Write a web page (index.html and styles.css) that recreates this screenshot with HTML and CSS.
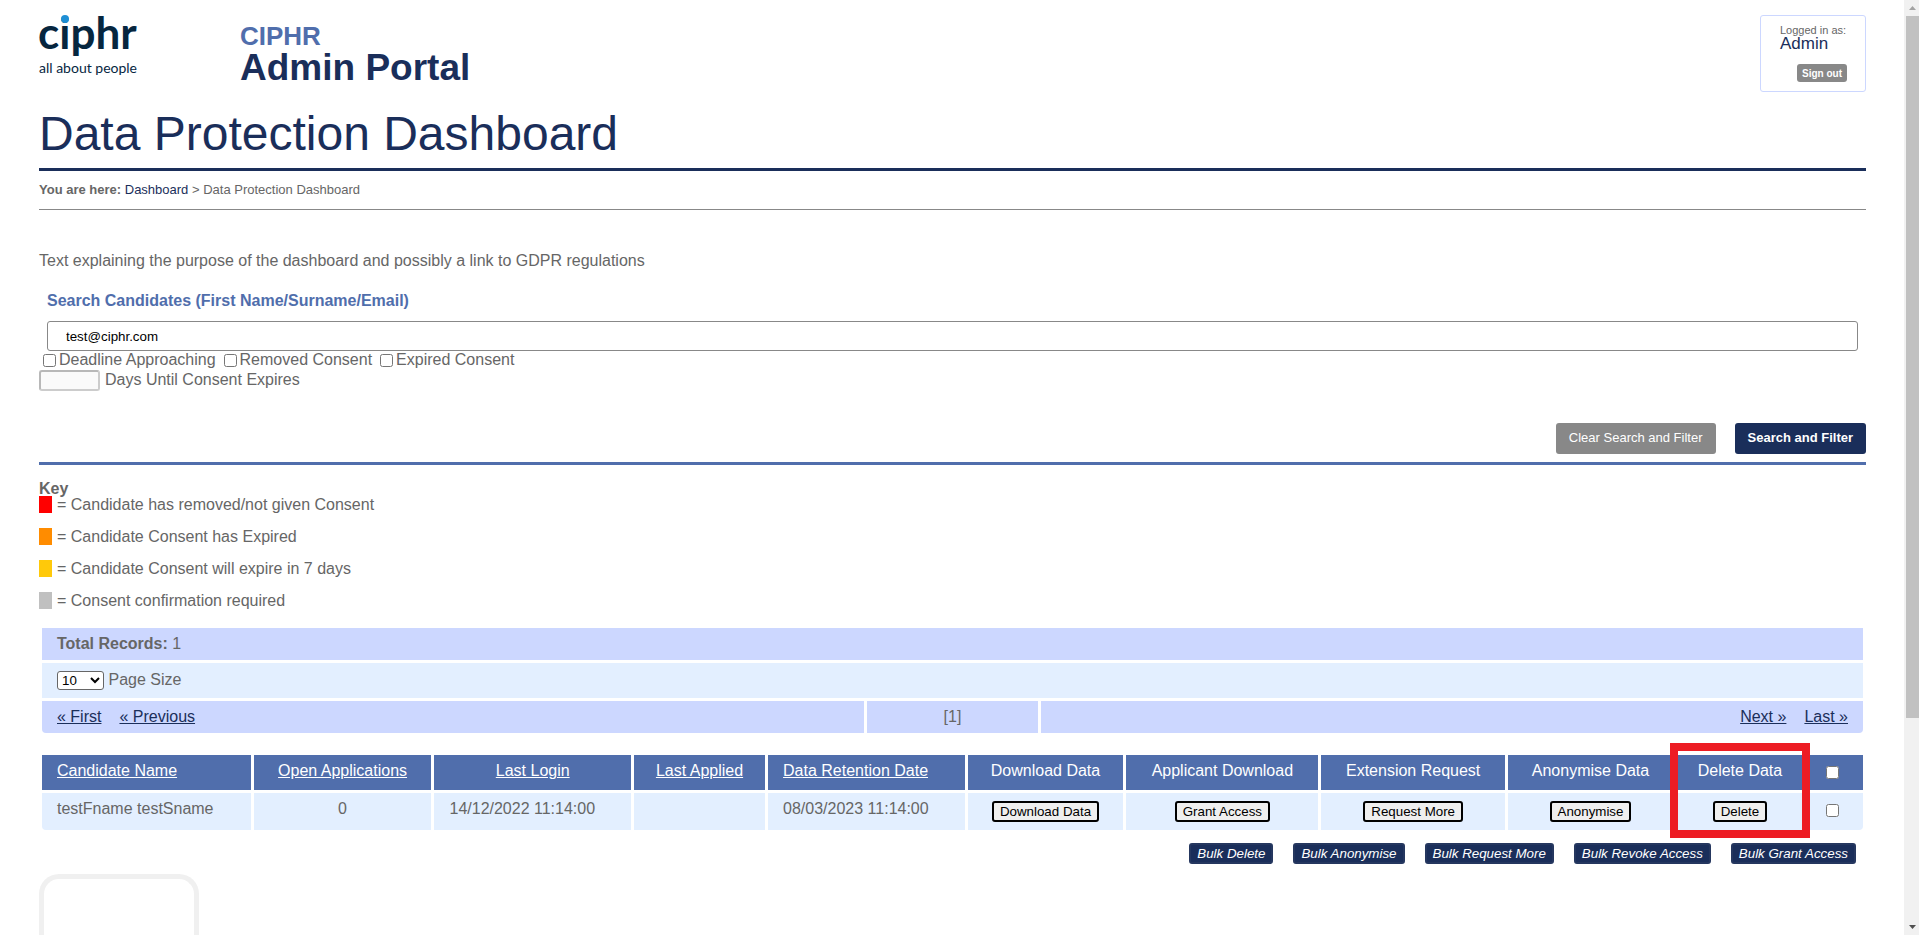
FILE: index.html
```html
<!DOCTYPE html>
<html lang="en">
<head>
    <meta charset="UTF-8">
    <title>Data Protection Dashboard</title>
    <link rel="stylesheet" href="styles.css">
</head>
<body>

    <div class="page">
        <header class="header">
            <a class="logo" href="#" aria-label="ciphr - all about people">
                <svg width="104" height="64" viewBox="0 0 104 64">
                    <text class="logo-name" x="-1" y="34">ciphr</text>
                    <circle cx="26" cy="4" r="4" fill="#1e8fd5" />
                    <text class="logo-tag" x="0" y="58">all about people</text>
                </svg>
            </a>
            <div class="brand">
                <div class="brand-company">CIPHR</div>
                <div class="brand-name">Admin Portal</div>
            </div>
            <div class="login">
                <div class="login-label">Logged in as:</div>
                <div class="login-user">Admin</div>
                <button class="sign-out" type="button">Sign out</button>
            </div>
        </header>

        <h1>Data Protection Dashboard</h1>

        <nav class="breadcrumb">
            <b>You are here:</b> <a href="#">Dashboard</a> &gt; Data Protection Dashboard
        </nav>

        <p class="intro">Text explaining the purpose of the dashboard and possibly a link to GDPR regulations</p>

        <form class="search">
            <div class="search-field">
                <label for="search">Search Candidates (First Name/Surname/Email)</label>
                <input type="text" id="search" value="test@ciphr.com">
            </div>
            <div class="filters">
                <input type="checkbox" id="deadline"><label for="deadline">Deadline Approaching</label>
                <input type="checkbox" id="removed"><label for="removed">Removed Consent</label>
                <input type="checkbox" id="expired"><label for="expired">Expired Consent</label>
            </div>
            <div class="days">
                <input type="text" id="days" disabled>
                <label for="days">Days Until Consent Expires</label>
            </div>
            <div class="actions">
                <button class="btn btn-clear" type="button">Clear Search and Filter</button>
                <button class="btn btn-search" type="button">Search and Filter</button>
            </div>
        </form>

        <h2 class="key-title">Key</h2>
        <ul class="key">
            <li><span class="swatch red"></span>= Candidate has removed/not given Consent</li>
            <li><span class="swatch orange"></span>= Candidate Consent has Expired</li>
            <li><span class="swatch yellow"></span>= Candidate Consent will expire in 7 days</li>
            <li><span class="swatch grey"></span>= Consent confirmation required</li>
        </ul>

        <table class="pager">
            <colgroup>
                <col>
                <col class="col-current">
                <col>
            </colgroup>
            <tr>
                <td class="dark" colspan="3"><b>Total Records:</b> 1</td>
            </tr>
            <tr>
                <td class="size" colspan="3">
                    <select id="page-size">
                        <option>10</option>
                        <option>20</option>
                        <option>50</option>
                    </select>
                    <label for="page-size">Page Size</label>
                </td>
            </tr>
            <tr>
                <td class="dark prev"><a href="#">« First</a><a href="#">« Previous</a></td>
                <td class="dark current">[1]</td>
                <td class="dark next"><a href="#">Next »</a><a href="#">Last »</a></td>
            </tr>
        </table>

        <table class="candidates">
            <thead>
                <tr>
                    <th class="name"><a href="#">Candidate Name</a></th>
                    <th><a href="#">Open Applications</a></th>
                    <th><a href="#">Last Login</a></th>
                    <th><a href="#">Last Applied</a></th>
                    <th class="date"><a href="#">Data Retention Date</a></th>
                    <th>Download Data</th>
                    <th>Applicant Download</th>
                    <th>Extension Request</th>
                    <th>Anonymise Data</th>
                    <th class="highlight">Delete Data</th>
                    <th class="tick"><input type="checkbox" aria-label="Select all"></th>
                </tr>
            </thead>
            <tbody>
                <tr>
                    <td class="name">testFname testSname</td>
                    <td>0</td>
                    <td class="date">14/12/2022 11:14:00</td>
                    <td></td>
                    <td class="date">08/03/2023 11:14:00</td>
                    <td><button type="button">Download Data</button></td>
                    <td><button type="button">Grant Access</button></td>
                    <td><button type="button">Request More</button></td>
                    <td><button type="button">Anonymise</button></td>
                    <td><button type="button">Delete</button></td>
                    <td class="tick"><input type="checkbox" aria-label="Select candidate"></td>
                </tr>
            </tbody>
        </table>

        <div class="bulk">
            <button type="button">Bulk Delete</button>
            <button type="button">Bulk Anonymise</button>
            <button type="button">Bulk Request More</button>
            <button type="button">Bulk Revoke Access</button>
            <button type="button">Bulk Grant Access</button>
        </div>

        <div class="footer-box"></div>
    </div>

    <div class="scrollbar">
        <svg width="15" height="16" viewBox="0 0 15 16"><path d="M5 10 L8.500 6 L12 10 Z" fill="#a3a3a3" /></svg>
        <div class="scroll-thumb"></div>
        <div class="scroll-rest"></div>
        <svg width="15" height="16" viewBox="0 0 15 16"><path d="M5 6 L12 6 L8.500 10 Z" fill="#505050" /></svg>
    </div>

</body>
</html>
```
FILE: styles.css
```css
* {
    box-sizing: border-box;
}

body {
    display: flex;
    height: 100vh;
    margin: 0;
    overflow: hidden;
    background-color: #fff;
    color: #666;
    font-family: "Liberation Sans", Arial, sans-serif;
    font-size: 16px;
    line-height: 18px;
}

button,
input,
select {
    font-family: inherit;
}

a {
    color: #1a2e5a;
}

.page {
    display: flex;
    flex-direction: column;
    flex: 1;
    padding: 15px 38px 0 39px;
}

/* header */

.header {
    display: flex;
    align-items: flex-start;
}

.logo {
    width: 201px;
    height: 64px;
}

.logo svg {
    overflow: visible;
}

.logo-name {
    font-family: Lato, sans-serif;
    font-size: 44px;
    font-weight: bold;
    fill: #06263f;
}

.logo-tag {
    font-family: Lato, sans-serif;
    font-size: 14px;
    fill: #06263f;
}

.brand {
    flex: 1;
    padding-top: 7px;
    font-weight: bold;
}

.brand-company {
    color: #506eac;
    font-size: 26px;
    line-height: 28px;
}

.brand-name {
    color: #1a2e5a;
    font-size: 37px;
    line-height: 36px;
}

.login {
    display: flex;
    flex-direction: column;
    width: 106px;
    height: 77px;
    padding: 8px 18px 9px 19px;
    border: 1px solid #ccd7ff;
    border-radius: 3px;
}

.login-label {
    font-size: 11px;
    line-height: 12px;
    white-space: nowrap;
}

.login-user {
    color: #1a2e5a;
    font-size: 17px;
    line-height: 16px;
}

.sign-out {
    align-self: flex-end;
    height: 18px;
    margin-top: auto;
    padding: 0 5px;
    border: none;
    border-radius: 3px;
    background-color: #888;
    color: #fff;
    font-size: 10px;
    font-weight: bold;
}

h1 {
    margin: 14px 0 0;
    padding-bottom: 7px;
    border-bottom: 3px solid #1a2e5a;
    color: #1a2e5a;
    font-size: 48px;
    font-weight: normal;
    line-height: 55px;
}

.breadcrumb {
    padding: 11px 0 12px;
    border-bottom: 1px solid #888;
    font-size: 13px;
    line-height: 15px;
}

.breadcrumb a {
    text-decoration: none;
}

.intro {
    margin: 42px 0 22px;
}

/* search */

.search-field {
    padding: 0 8px;
}

.search-field label {
    display: block;
    margin-bottom: 11px;
    color: #506eac;
    font-weight: bold;
}

.search-field input {
    display: block;
    width: 100%;
    height: 30px;
    padding: 0 18px;
    border: 1px solid #888;
    border-radius: 3px;
}

.filters {
    display: flex;
    align-items: flex-start;
    height: 19px;
}

.filters input {
    margin: 3px 3px 0 4px;
}

.filters label {
    margin-right: 4px;
}

.days {
    display: flex;
    gap: 5px;
    line-height: 20px;
}

.days input {
    width: 61px;
    height: 21px;
    border: 2px solid #ccc;
    border-top-color: #b8b8b8;
    border-left-color: #b8b8b8;
    border-radius: 3px;
    background-color: #fafafa;
}

.actions {
    display: flex;
    justify-content: flex-end;
    gap: 19px;
    margin-top: 32px;
    padding-bottom: 8px;
    border-bottom: 3px solid #506eac;
}

.btn {
    height: 31px;
    padding: 0 13px 2px;
    border: none;
    border-radius: 3px;
    color: #fff;
    font-size: 13px;
}

.btn-clear {
    background-color: #888;
}

.btn-search {
    background-color: #1a2e5a;
    font-weight: bold;
}

/* key */

.key-title {
    margin: 16px 0 0;
    font-size: 16px;
    line-height: 15px;
}

.key {
    margin: 0 0 16px;
    padding: 0;
    list-style: none;
}

.key li {
    display: flex;
    gap: 5px;
    line-height: 17px;
}

.key li + li {
    margin-top: 15px;
}

.swatch {
    width: 13px;
    height: 17px;
}

.red {
    background-color: #ff0000;
}

.orange {
    background-color: #ff8c00;
}

.yellow {
    background-color: #ffc90a;
}

.grey {
    background-color: #c0c0c0;
}

/* tables */

table {
    width: 100%;
    border-spacing: 3px;
}

td,
th {
    padding: 7px 15px;
    background-color: #e3efff;
    font-weight: normal;
    vertical-align: top;
}

tr:last-child td:first-child {
    border-bottom-left-radius: 4px;
}

tr:last-child td:last-child {
    border-bottom-right-radius: 4px;
}

.pager {
    table-layout: fixed;
}

.col-current {
    width: 171px;
}

.pager .dark {
    background-color: #ccd7ff;
}

.pager .size {
    height: 35px;
    padding-top: 8px;
}

.pager select {
    width: 47px;
    height: 19px;
    border: 1px solid #666;
    border-radius: 3px;
    background-color: #fff;
}

.prev a + a,
.next a + a {
    margin-left: 18px;
}

.current {
    text-align: center;
}

.next {
    text-align: right;
}

.candidates {
    margin-top: 16px;
    text-align: center;
}

.candidates th {
    height: 35px;
    background-color: #506eac;
    color: #fff;
}

.candidates th a {
    color: #fff;
}

.candidates td {
    height: 37px;
}

.candidates .name,
.candidates .date,
.candidates .tick {
    text-align: left;
}

.candidates .tick {
    padding-top: 8px;
    padding-bottom: 6px;
}

.candidates button {
    height: 21px;
    margin-top: 1px;
    padding: 0 6px;
    border: 2px solid #000;
    border-radius: 3px;
    background-color: #efefef;
    color: #000;
}

/* red frame round the delete column */
.highlight {
    position: relative;
}

.highlight::after {
    content: "";
    position: absolute;
    top: -12px;
    left: -6px;
    right: -6px;
    height: 79px;
    border: 8px solid #ed1c24;
}

.bulk {
    display: flex;
    justify-content: flex-end;
    gap: 20px;
    margin: 10px 10px 10px 0;
}

.bulk button {
    height: 21px;
    padding: 0 6px;
    border: 2px solid #25375f;
    border-radius: 3px;
    background-color: #1a2e5a;
    color: #fff;
    font-style: italic;
}

.footer-box {
    flex: 1;
    width: 160px;
    border: 5px solid #f0f0f0;
    border-bottom: none;
    border-radius: 20px 20px 0 0;
}

/* scrollbar */

.scrollbar {
    display: flex;
    flex-direction: column;
    width: 15px;
    background-color: #f1f1f1;
}

.scroll-thumb {
    flex: 7;
    margin-left: 2px;
    background-color: #c1c1c1;
}

.scroll-rest {
    flex: 2;
}
```
